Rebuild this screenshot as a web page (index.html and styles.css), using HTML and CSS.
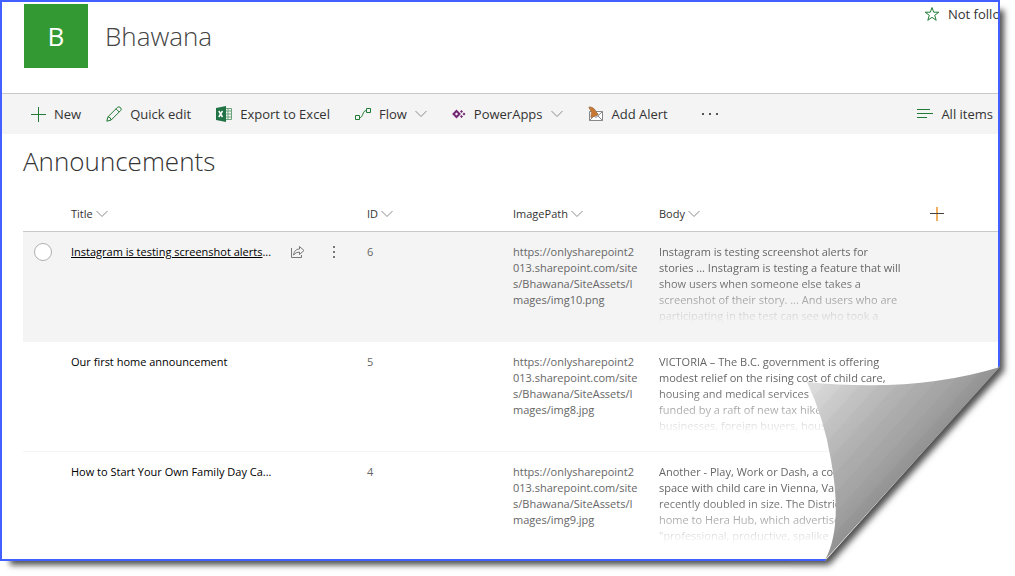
FILE: index.html
```html
<!DOCTYPE html>
<html lang="en">
  <head>
    <meta charset="UTF-8" />
    <meta name="viewport" content="width=device-width, initial-scale=1.0" />
    <title>Bhawana - Announcements</title>
    <!-- Stylesheet -->
    <link rel="stylesheet" href="styles.css" />
  </head>
  <body>
    <div class="sheet">
      <div class="page">
        <header class="site-header">
          <div class="site-logo">B</div>
          <h1>Bhawana</h1>
          <button class="follow">
            <svg width="16" height="16" viewBox="0 0 16 16">
              <path d="M8 1.5 L9.7 6.2 H14.8 L10.7 9.3 L12.2 14.3 L8 11.3 L3.8 14.3 L5.3 9.3 L1.2 6.2 H6.3 Z" />
            </svg>
            <span>Not following</span>
          </button>
        </header>

        <nav class="commands">
          <button class="cmd-new">
            <svg width="16" height="16" viewBox="0 0 16 16"><path d="M8.5 1 V16 M1 8.5 H16" /></svg>
            New
          </button>
          <button class="cmd-edit">
            <svg width="16" height="16" viewBox="0 0 16 16">
              <path d="M.8 15.2 L2 10.800 L11.500 1.300 Q12.800 .2 14.500 1.600 Q16 3.200 14.700 4.500 L5.200 14 Z M2 10.800 Q4.800 11.200 5.200 14 M10 2.800 L13.200 6" />
            </svg>
            Quick edit
          </button>
          <button class="cmd-excel">
            <svg width="16" height="16" viewBox="0 0 16 16">
              <path class="grid" d="M9 2.500 H15.500 V13.500 H9 M9 5 H15 M9 8 H15 M9 11 H15 M12 3 V13" />
              <path class="book" d="M0 2 L10 0 V16 L0 14 Z" />
              <path class="cross" d="M2.800 5 L6.500 11 M6.500 5 L2.800 11" />
            </svg>
            Export to Excel
          </button>
          <button class="cmd-flow">
            <svg width="16" height="16" viewBox="0 0 16 16">
              <path d="M.5 9.500 H4.500 V13.500 H.5 Z M11.500 2.500 H15.500 V6.500 H11.500 Z M4.500 11.500 C8.500 12 7 4.500 11.500 4.500" />
            </svg>
            Flow
            <svg class="chevron" width="12" height="8" viewBox="0 0 12 8"><path d="M.5 1 L6 6.500 L11.500 1" /></svg>
          </button>
          <button class="cmd-apps">
            <svg width="14" height="14" viewBox="0 0 14 14">
              <path class="big" d="M4.500 4 L7.500 7 L4.500 10 L1.500 7 Z" />
              <path class="small" d="M9.500 3 L11 4.500 L9.500 6 L8 4.500 Z M12 5.500 L13.500 7 L12 8.500 L10.500 7 Z M9.500 8 L11 9.500 L9.500 11 L8 9.500 Z" />
            </svg>
            PowerApps
            <svg class="chevron" width="12" height="8" viewBox="0 0 12 8"><path d="M.5 1 L6 6.500 L11.500 1" /></svg>
          </button>
          <button class="cmd-alert">
            <svg width="16" height="16" viewBox="0 0 16 16">
              <path class="mail" d="M1.500 5.500 H14.500 V14.500 H1.500 Z M1.500 14.500 L6 10 M14.500 14.500 L10 10 M14.500 5.500 L8 11.500 L5 9" />
              <path class="bell" d="M.8 1.500 Q1.500 .5 3 1.200 L5 2 Q7 3 8 6 L10 8 L10 8.800 L3 11.500 L3 10 Q4 6 2.500 4 Z" />
            </svg>
            Add Alert
          </button>
          <button class="cmd-more" aria-label="More">
            <svg width="18" height="4" viewBox="0 0 18 4"><path d="M1 1 h2 v2 h-2 Z M8 1 h2 v2 h-2 Z M15 1 h2 v2 h-2 Z" /></svg>
          </button>
          <button class="cmd-view">
            <svg width="16" height="12" viewBox="0 0 16 12"><path d="M0 1.500 H13 M0 5.500 H16 M0 9.500 H10" /></svg>
            All items
          </button>
        </nav>

        <main>
          <h2>Announcements</h2>
          <table>
            <colgroup>
              <col class="col-check" />
              <col class="col-title" />
              <col class="col-id" />
              <col class="col-path" />
              <col class="col-body" />
              <col />
            </colgroup>
            <thead>
              <tr>
                <th></th>
                <th>Title <svg class="chevron" width="12" height="8" viewBox="0 0 12 8"><path d="M.5 1 L6 6.500 L11.500 1" /></svg></th>
                <th>ID <svg class="chevron" width="12" height="8" viewBox="0 0 12 8"><path d="M.5 1 L6 6.500 L11.500 1" /></svg></th>
                <th>ImagePath <svg class="chevron" width="12" height="8" viewBox="0 0 12 8"><path d="M.5 1 L6 6.500 L11.500 1" /></svg></th>
                <th>Body <svg class="chevron" width="12" height="8" viewBox="0 0 12 8"><path d="M.5 1 L6 6.500 L11.500 1" /></svg></th>
                <th>
                  <button class="add-column" aria-label="Add column">
                    <svg width="14" height="14" viewBox="0 0 14 14"><path class="down" d="M7 0 V14" /><path class="across" d="M0 6.500 H14" /></svg>
                  </button>
                </th>
              </tr>
            </thead>
            <tbody>
              <tr class="active">
                <td class="check"><input type="radio" name="row" aria-label="Select row" /></td>
                <td>
                  <div class="title-cell">
                    <span class="title"><a href="#">Instagram is testing screenshot alerts</a>...</span>
                    <button aria-label="Share">
                      <svg width="16" height="14" viewBox="0 0 16 14">
                        <path d="M1.500 3 V12.500 H11.500 V10 M3.500 10 Q4.500 4 9.500 4 V1.500 L14 5.500 L9.500 9.500 V7 Q6 7 3.500 10 Z" />
                      </svg>
                    </button>
                    <button class="dots" aria-label="Open menu">
                      <svg width="4" height="14" viewBox="0 0 4 14"><path d="M1 1 h2 v2 h-2 Z M1 6 h2 v2 h-2 Z M1 11 h2 v2 h-2 Z" /></svg>
                    </button>
                  </div>
                </td>
                <td>6</td>
                <td>https://onlysharepoint2<br />013.sharepoint.com/site<br />s/Bhawana/SiteAssets/I<br />mages/img10.png</td>
                <td>
                  <div class="fade">Instagram is testing screenshot alerts for<br />stories ... Instagram is testing a feature that will<br />show users when someone else takes a<br />screenshot of their story. ... And users who are<br />participating in the test can see who took a</div>
                </td>
                <td></td>
              </tr>
              <tr>
                <td></td>
                <td><a href="#">Our first home announcement</a></td>
                <td>5</td>
                <td>https://onlysharepoint2<br />013.sharepoint.com/site<br />s/Bhawana/SiteAssets/I<br />mages/img8.jpg</td>
                <td>
                  <div class="fade">VICTORIA – The B.C. government is offering<br />modest relief on the rising cost of child care,<br />housing and medical services<br />funded by a raft of new tax hikes<br />businesses, foreign buyers, house</div>
                </td>
                <td></td>
              </tr>
              <tr>
                <td></td>
                <td><a href="#">How to Start Your Own Family Day Ca...</a></td>
                <td>4</td>
                <td>https://onlysharepoint2<br />013.sharepoint.com/site<br />s/Bhawana/SiteAssets/I<br />mages/img9.jpg</td>
                <td>
                  <div class="fade">Another - Play, Work or Dash, a co-work<br />space with child care in Vienna, Va., has<br />recently doubled in size. The District is<br />home to Hera Hub, which advertises<br />"professional, productive, spalike</div>
                </td>
                <td></td>
              </tr>
            </tbody>
          </table>
        </main>
      </div>

      <!-- Turned page corner -->
      <svg class="curl" width="225" height="225" viewBox="790 351 225 225">
        <defs>
          <linearGradient id="paper" gradientUnits="userSpaceOnUse" x1="810" y1="380" x2="913" y2="474">
            <stop offset="0" stop-color="#e2e2e2" />
            <stop offset="0.3" stop-color="#c6c6c6" />
            <stop offset="0.55" stop-color="#b2b2b2" />
            <stop offset="0.8" stop-color="#a2a2a2" />
            <stop offset="1" stop-color="#8e8e8e" />
          </linearGradient>
          <linearGradient id="bands" gradientUnits="userSpaceOnUse" spreadMethod="repeat" x1="810" y1="380" x2="820" y2="389">
            <stop offset="0" stop-color="#000" stop-opacity="0.02" />
            <stop offset="1" stop-color="#000" stop-opacity="0" />
          </linearGradient>
          <filter id="soft" filterUnits="userSpaceOnUse" x="740" y="300" width="320" height="320">
            <feGaussianBlur stdDeviation="3" />
          </filter>
          <clipPath id="outside">
            <path d="M1000 366 L1000 351 H1015 V576 H790 V561 H825 Z" />
          </clipPath>
        </defs>
        <g clip-path="url(#outside)">
          <rect x="790" y="351" width="225" height="225" fill="#fff" />
          <path d="M740 300 H1004 V371 L829 565 H740 Z" fill="#505050" filter="url(#soft)" />
        </g>
        <path d="M807 382 Q915 393 1000 367 L825 560 Q843 527 831 460 Q824 418 807 382 Z" fill="url(#paper)" />
        <path d="M807 382 Q915 393 1000 367 L825 560 Q843 527 831 460 Q824 418 807 382 Z" fill="url(#bands)" />
      </svg>
    </div>
  </body>
</html>
```
FILE: styles.css
```css
* {
  padding: 0;
  margin: 0;
  box-sizing: border-box;
  font-family: "Open Sans", sans-serif;
}
body {
  background-color: #ffffff;
  color: #333333;
}
svg {
  fill: none;
  stroke: #217a35;
  flex: none;
}
button {
  display: flex;
  align-items: center;
  background: none;
  border: none;
  color: #333333;
  font-size: 13px;
  white-space: nowrap;
  cursor: pointer;
}
.sheet {
  position: relative;
  padding: 0 15px 15px 0;
}
.page {
  overflow: hidden;
  border: 2px solid #4160ff;
  background-color: #ffffff;
  box-shadow: 7px 7px 6px -3px #505050;
}
.site-header {
  display: flex;
  align-items: flex-start;
  height: 91px;
  padding: 2px 0 0 22px;
}
.site-logo {
  width: 64px;
  height: 64px;
  background-color: #339933;
  color: #ffffff;
  font-size: 26px;
  line-height: 64px;
  text-align: center;
}
h1 {
  margin-left: 17px;
  color: #444444;
  font-size: 26px;
  font-weight: 300;
  line-height: 64px;
}
.follow {
  width: 74px;
  height: 20px;
  margin-left: auto;
  gap: 8px;
}
.commands {
  display: flex;
  align-items: center;
  height: 41px;
  padding: 0 5px 0 28px;
  border-top: 1px solid #c8c8c8;
  background-color: #f4f4f4;
}
.commands button {
  gap: 8px;
  margin-right: 25px;
}
.chevron {
  stroke: #8a8a8a;
}
.cmd-excel .grid {
  stroke: #6aa57a;
}
.cmd-excel .book {
  fill: #217346;
  stroke: none;
}
.cmd-excel .cross {
  stroke: #ffffff;
  stroke-width: 1.5;
}
.cmd-apps .big {
  stroke: #742774;
  stroke-width: 2;
}
.cmd-apps .small {
  fill: #742774;
  stroke: none;
}
.cmd-alert .mail {
  fill: #ffffff;
  stroke: #888888;
}
.cmd-alert .bell {
  fill: #c87830;
  stroke: #a87850;
}
.commands .cmd-more {
  margin-left: 8px;
}
.cmd-more svg,
.dots svg {
  fill: #555555;
  stroke: none;
}
.commands .cmd-view {
  margin: 0 0 0 auto;
}
main {
  padding-left: 21px;
}
h2 {
  color: #333333;
  font-size: 26px;
  font-weight: 300;
  line-height: 54px;
}
table {
  width: 100%;
  table-layout: fixed;
  border-collapse: collapse;
  color: #666666;
  font-size: 11px;
  line-height: 16px;
  white-space: nowrap;
}
.col-check {
  width: 48px;
}
.col-title {
  width: 296px;
}
.col-id,
.col-path {
  width: 146px;
}
.col-body {
  width: 271px;
}
th {
  height: 43px;
  padding-top: 10px;
  border-bottom: 1px solid #c8c8c8;
  color: #333333;
  font-weight: 400;
  text-align: left;
}
td {
  height: 110px;
  padding-top: 12px;
  border-bottom: 1px solid #f4f4f4;
  vertical-align: top;
}
tbody tr:last-child td {
  height: 108px;
  border: none;
}
td a {
  color: #000000;
  text-decoration: none;
}
.add-column .down {
  stroke: #f0b060;
  stroke-width: 2;
}
.add-column .across {
  stroke: #444444;
}
.active {
  background-color: #f4f4f4;
}
.active a {
  text-decoration: underline;
}
.check input {
  display: block;
  appearance: none;
  width: 18px;
  height: 18px;
  margin: -1px 0 0 11px;
  border: 1px solid #b0b0b0;
  border-radius: 50%;
  background-color: #ffffff;
}
.title-cell {
  display: flex;
  align-items: center;
}
.title-cell svg {
  stroke: #777777;
}
.title-cell .dots svg {
  fill: #777777;
  stroke: none;
}
.title {
  width: 219px;
  color: #000000;
}
.dots {
  margin-left: 26px;
}
.fade {
  -webkit-mask-image: linear-gradient(#000000 45%, transparent);
  mask-image: linear-gradient(#000000 45%, transparent);
}
.curl {
  position: absolute;
  right: 0;
  bottom: 0;
  stroke: none;
  pointer-events: none;
}
```
